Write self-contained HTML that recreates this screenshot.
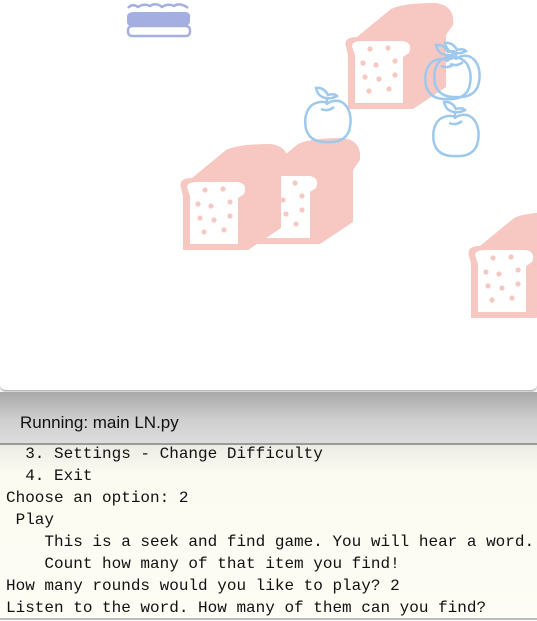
<!DOCTYPE html>
<html><head><meta charset="utf-8">
<style>
html,body{margin:0;padding:0;width:537px;height:621px;overflow:hidden;background:#fff;}
.top{position:absolute;left:0;top:0;width:537px;height:390px;background:#fff;border-bottom:1px solid #bbb;border-radius:0 0 6px 6px;box-shadow:0 1px 2px rgba(0,0,0,.25);}
.hdr{position:absolute;left:0;top:392px;width:537px;height:51px;background:linear-gradient(#a9a9a9,#cfcfcf 55%,#dcdcdc);border-bottom:2px solid #9a9a9a;}
.hdr span{position:absolute;left:20px;top:21px;font:17px "Liberation Sans",sans-serif;color:#111;}
.con{position:absolute;left:0;top:445px;width:537px;height:173px;background:linear-gradient(#ecece4,#fbfbf2 30px,#fdfdf5);border-bottom:2px solid #bbb;}
.con pre{margin:0;position:absolute;left:6px;top:-2px;font:16px/22px "Liberation Mono",monospace;color:#111;}
</style></head><body>
<div class="top">
<svg width="537" height="390" viewBox="0 0 537 390">
<defs>
<g id="bread">
<path d="M3,12 Q0,2 14,2 L48,-26 Q60,-32 92,-32 Q112,-30 110,-10 L103,0 L103,52 L70,74 L5,74 L5,20 Z" fill="#f7c7c1"/>
<path d="M10,14 Q6,6 20,6 L60,6 Q70,8 66,18 L60,22 L60,68 L12,68 L12,20 Z" fill="#fff"/>
<g fill="#f7c7c1"><circle cx="27" cy="14" r="2.6"/><circle cx="45" cy="13" r="2.6"/><circle cx="20" cy="28" r="2.6"/><circle cx="33" cy="30" r="2.6"/><circle cx="52" cy="26" r="2.6"/><circle cx="22" cy="42" r="2.6"/><circle cx="36" cy="44" r="2.6"/><circle cx="52" cy="40" r="2.6"/><circle cx="26" cy="56" r="2.6"/><circle cx="46" cy="54" r="2.6"/></g>
</g>
<g id="apple" fill="none" stroke="#9ec9ec" stroke-width="2.5">
<path d="M12,1 Q20,0 24,8 Q30,6 33,9 Q28,12 22,11 Q14,10 12,1 Z"/>
<path d="M23,11 L23,18"/>
<path d="M17,22 Q24,25 30,20"/>
<path d="M24,16 Q36,10 43,20 Q49,30 45,44 Q40,56 24,55 Q6,56 2,42 Q-1,26 8,18 Q16,13 24,16 Z"/>
</g>
</defs>
<g fill="#a5aee0">
<path d="M128,8 Q132,3 138,7 Q144,3 150,6 Q156,2 162,7 Q168,3 174,6 Q180,2 188,8" fill="none" stroke="#a5aee0" stroke-width="2.5"/>
<path d="M127,16 Q128,12 134,12 L186,12 Q191,13 190,18 L190,22 Q189,26 184,26 L132,26 Q127,26 127,22 Z"/>
<rect x="128" y="26" width="62" height="10" rx="4" fill="none" stroke="#a5aee0" stroke-width="2.5"/>
</g>
<use href="#bread" x="343" y="35"/>
<use href="#bread" x="250" y="170"/>
<use href="#bread" x="178" y="176"/>
<use href="#bread" x="466" y="244"/>
<use href="#apple" x="304" y="87"/>
<use href="#apple" x="424" y="44"/>
<use href="#apple" x="433" y="42"/>
<use href="#apple" x="432" y="101"/>
</svg>
</div>
<div class="hdr"><span>Running: main LN.py</span></div>
<div class="con"><pre>  3. Settings - Change Difficulty
  4. Exit
Choose an option: 2
 Play
    This is a seek and find game. You will hear a word.
    Count how many of that item you find!
How many rounds would you like to play? 2
Listen to the word. How many of them can you find?</pre></div>
</body></html>
